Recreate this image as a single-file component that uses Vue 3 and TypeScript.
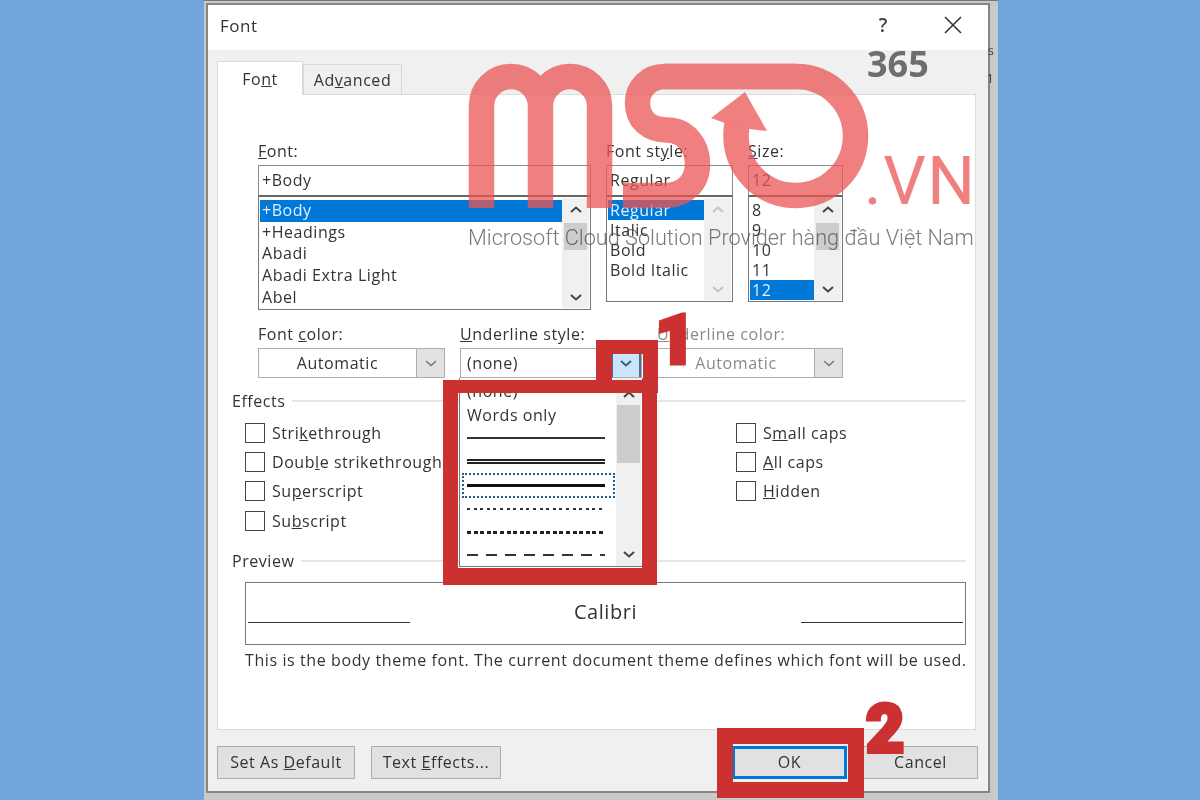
<template>
  <div class="stage">
    <div class="window">
      <span class="doc-mark mark-a">s</span>
      <span class="doc-mark mark-b">1</span>

      <div class="dialog">
        <div class="titlebar">
          <span class="title">Font</span>
          <span class="help">?</span>
          <svg class="close" width="18" height="18" viewBox="0 0 18 18">
            <path d="M1 1 L17 17 M17 1 L1 17" stroke="#333" stroke-width="1.6" fill="none" />
          </svg>
        </div>

        <div class="tabs">
          <div class="tab active">Fo<u>n</u>t</div>
          <div class="tab">Ad<u>v</u>anced</div>
        </div>

        <div class="panel">
          <div class="pickers">
            <div v-for="p in pickers" :key="p.key" class="picker">
              <div class="label">
                {{ p.pre }}<u>{{ p.key }}</u>{{ p.post }}
              </div>
              <div class="input">{{ p.value }}</div>
              <div class="list" :style="{ height: p.height + 'px' }">
                <div class="rows" :style="{ lineHeight: p.rowHeight + 'px' }">
                  <div
                    v-for="o in p.options"
                    :key="o"
                    :class="['row', { selected: o === p.value }]"
                  >
                    {{ o }}
                  </div>
                </div>
                <div :class="['scroll', { off: !p.thumb }]">
                  <svg class="chev" width="14" height="9" viewBox="0 0 14 9">
                    <path d="M2 7 L7 2.5 L12 7" />
                  </svg>
                  <div v-if="p.thumb" class="thumb"></div>
                  <svg class="chev down" width="14" height="9" viewBox="0 0 14 9">
                    <path d="M2 2 L7 6.5 L12 2" />
                  </svg>
                </div>
              </div>
            </div>
          </div>

          <div class="combos">
            <div class="combo-field">
              <div class="label">Font <u>c</u>olor:</div>
              <div class="combo">
                <span class="combo-text center">Automatic</span>
                <span class="combo-btn">
                  <svg width="14" height="9" viewBox="0 0 14 9"><path d="M2 2 L7 6.5 L12 2" /></svg>
                </span>
              </div>
            </div>

            <div class="combo-field">
              <div class="label"><u>U</u>nderline style:</div>
              <div class="combo open">
                <span class="combo-text">(none)</span>
                <span class="combo-btn hot">
                  <svg width="14" height="9" viewBox="0 0 14 9"><path d="M2 2 L7 6.5 L12 2" /></svg>
                </span>
                <div class="dropdown">
                  <div class="drop-rows">
                    <div class="drop-row">(none)</div>
                    <div class="drop-row">Words only</div>
                    <div v-for="l in lineStyles" :key="l" :class="['drop-row', { focus: l === 'thick' }]">
                      <span :class="['line', l]"></span>
                    </div>
                  </div>
                  <div class="scroll drop-scroll">
                    <svg class="chev" width="14" height="9" viewBox="0 0 14 9">
                      <path d="M2 7 L7 2.5 L12 7" />
                    </svg>
                    <div class="thumb drop-thumb"></div>
                    <svg class="chev down" width="14" height="9" viewBox="0 0 14 9">
                      <path d="M2 2 L7 6.5 L12 2" />
                    </svg>
                  </div>
                </div>
              </div>
            </div>

            <div class="combo-field disabled">
              <div class="label"><u>U</u>nderline color:</div>
              <div class="combo">
                <span class="combo-text center">Automatic</span>
                <span class="combo-btn">
                  <svg width="14" height="9" viewBox="0 0 14 9"><path d="M2 2 L7 6.5 L12 2" /></svg>
                </span>
              </div>
            </div>
          </div>

          <div class="group-head">
            <span>Effects</span>
            <div class="rule"></div>
          </div>
          <div class="effects">
            <div class="effect-col">
              <label v-for="e in effectsLeft" :key="e.key + e.pre" class="check">
                <span class="box"></span>
                <span>{{ e.pre }}<u>{{ e.key }}</u>{{ e.post }}</span>
              </label>
            </div>
            <div class="effect-col">
              <label v-for="e in effectsRight" :key="e.key + e.pre" class="check">
                <span class="box"></span>
                <span>{{ e.pre }}<u>{{ e.key }}</u>{{ e.post }}</span>
              </label>
            </div>
          </div>

          <div class="group-head preview-head">
            <span>Preview</span>
            <div class="rule"></div>
          </div>
          <div class="preview">
            <div class="preview-line"></div>
            <span class="preview-text">Calibri</span>
            <div class="preview-line"></div>
          </div>
          <div class="desc">This is the body theme font. The current document theme defines which font will be used.</div>
        </div>

        <div class="footer">
          <button class="btn wide">Set As <u>D</u>efault</button>
          <button class="btn effects-btn">Text <u>E</u>ffects...</button>
          <button class="btn ok">OK</button>
          <button class="btn cancel">Cancel</button>
        </div>
      </div>
    </div>

    <!-- annotations on top of the screenshot -->
    <div class="red-box box-arrow"></div>
    <div class="red-box box-menu"></div>
    <div class="red-box box-ok"></div>
    <span class="step step-1">1</span>
    <span class="step step-2">2</span>

    <!-- watermark -->
    <svg class="logo" width="1200" height="800" viewBox="0 0 1200 800">
      <g fill="none" stroke="#eb5555" stroke-width="25.5">
        <path d="M481.5 208 V106 a29.5 29.5 0 0 1 59 0 V208 M540.5 106 a29.5 29.5 0 0 1 59 0 V208" />
        <path d="M796 76.5 H665 C649 76.5 637.5 88 637.5 103 C637.5 119 649 130 667 130 C685 130 697.5 145 697.5 164 C697.5 183 684 195.5 665 195.5 H623" />
        <path d="M665 76.5 H796 A59.5 59.5 0 0 1 796 195.5 A60 60 0 0 1 736 135.5 C736 128 737 122 739 116" />
      </g>
      <polygon points="745,92 767,131 750,129 725,123 711,118" fill="#eb5555" />
    </svg>
    <span class="wm-365">365</span>
    <span class="wm-vn">.VN</span>
    <span class="wm-tag">Microsoft Cloud Solution Provider hàng đầu Việt Nam</span>
  </div>
</template>

<script setup lang="ts">
interface Picker {
  pre: string;
  key: string;
  post: string;
  value: string;
  options: string[];
  height: number;
  rowHeight: number;
  thumb: boolean;
}

interface Effect {
  pre: string;
  key: string;
  post: string;
}

const pickers: Picker[] = [
  {
    pre: "",
    key: "F",
    post: "ont:",
    value: "+Body",
    options: ["+Body", "+Headings", "Abadi", "Abadi Extra Light", "Abel"],
    height: 114,
    rowHeight: 21.7,
    thumb: true,
  },
  {
    pre: "Font st",
    key: "y",
    post: "le:",
    value: "Regular",
    options: ["Regular", "Italic", "Bold", "Bold Italic"],
    height: 106,
    rowHeight: 20,
    thumb: false,
  },
  {
    pre: "",
    key: "S",
    post: "ize:",
    value: "12",
    options: ["8", "9", "10", "11", "12"],
    height: 106,
    rowHeight: 20,
    thumb: true,
  },
];

const lineStyles = ["thin", "double", "thick", "dotted", "bold-dots", "dashed"];

const effectsLeft: Effect[] = [
  { pre: "Stri", key: "k", post: "ethrough" },
  { pre: "Doub", key: "l", post: "e strikethrough" },
  { pre: "Su", key: "p", post: "erscript" },
  { pre: "Su", key: "b", post: "script" },
];

const effectsRight: Effect[] = [
  { pre: "S", key: "m", post: "all caps" },
  { pre: "", key: "A", post: "ll caps" },
  { pre: "", key: "H", post: "idden" },
];
</script>

<style>
html,
body {
  margin: 0;
  background: #6fa5d8;
}
</style>

<style scoped>
.stage {
  position: relative;
  width: 1200px;
  height: 800px;
  overflow: hidden;
  display: flex;
  justify-content: center;
  background: #6fa5d8;
  font-family: "Open Sans", "Noto Sans", sans-serif;
  font-size: 16px;
  color: #333;
  filter: blur(0.35px);
}

.window {
  position: relative;
  box-sizing: border-box;
  width: 794px;
  height: 800px;
  margin-left: 2px;
  padding: 2px 8px 7px 2px;
  background: #c9c9c9;
  border-top: 1px solid #777;
}

.doc-mark {
  position: absolute;
  right: 4px;
  font-size: 13px;
  color: #444;
}
.mark-a {
  top: 40px;
}
.mark-b {
  top: 68px;
}

.dialog {
  box-sizing: border-box;
  height: 100%;
  display: flex;
  flex-direction: column;
  background: #f0f0f0;
  border: 2px solid #858585;
  letter-spacing: 0.55px;
}

.titlebar {
  flex: none;
  box-sizing: border-box;
  height: 45px;
  display: flex;
  align-items: center;
  padding: 0 26px 5px 12px;
  background: #fff;
}
.title {
  font-size: 17px;
  flex: 1;
}
.help {
  font-size: 19px;
  font-weight: 600;
  color: #444;
  margin-right: 56px;
}

.tabs {
  flex: none;
  display: flex;
  align-items: flex-end;
  height: 44px;
  padding-left: 9px;
}
.tab {
  box-sizing: border-box;
  width: 99px;
  height: 30px;
  line-height: 30px;
  text-align: center;
  background: #f0f0f0;
  border: 1px solid #d9d9d9;
  border-bottom: 0;
}
.tab.active {
  width: 86px;
  height: 34px;
  line-height: 34px;
  background: #fff;
  margin-bottom: -1px;
  position: relative;
  z-index: 1;
}

.panel {
  flex: 1;
  margin: 0 12px 0 9px;
  background: #fff;
  border: 1px solid #dcdcdc;
}

.pickers {
  display: grid;
  grid-template-columns: 333px 127px 95px;
  column-gap: 15px;
  height: 180px;
  margin: 48px 0 0 40px;
}
.label {
  height: 22px;
  line-height: 16px;
}
.input {
  box-sizing: border-box;
  height: 31px;
  line-height: 28px;
  padding-left: 3px;
  border: 1.5px solid #8c8c8c;
  border-bottom-color: #666;
}
.list {
  box-sizing: border-box;
  display: flex;
  border: 1.5px solid #777;
  border-top: 1.5px solid #666;
  padding: 1px;
}
.rows {
  flex: 1;
  padding-top: 2px;
  min-width: 0;
}
.row {
  padding-left: 2px;
}
.row.selected {
  background: #0078d7;
  color: #dff0ff;
}
.scroll {
  flex: none;
  width: 27px;
  display: flex;
  flex-direction: column;
  align-items: center;
  background: #f0f0f0;
  padding: 7px 0 6px;
  box-sizing: border-box;
}
.chev {
  flex: none;
}
.chev path,
.combo-btn path {
  fill: none;
  stroke: #444;
  stroke-width: 2;
}
.scroll.off .chev path {
  stroke: #c4c4c4;
}
.thumb {
  width: 23px;
  height: 27px;
  margin-top: 9px;
  background: #cdcdcd;
}
.chev.down {
  margin-top: auto;
}

.combos {
  display: grid;
  grid-template-columns: 187px 182px 186px;
  column-gap: 15px;
  margin-left: 40px;
  width: 585px;
}
.combo-field .label {
  height: 25px;
  line-height: 22px;
}
.combo {
  position: relative;
  box-sizing: border-box;
  height: 30px;
  display: flex;
  border: 1px solid #adadad;
}
.combo-text {
  flex: 1;
  line-height: 28px;
  padding-left: 6px;
}
.combo-text.center {
  padding-left: 0;
  text-align: center;
}
.combo-btn {
  flex: none;
  width: 27px;
  display: flex;
  align-items: center;
  justify-content: center;
  background: #e1e1e1;
  border-left: 1px solid #adadad;
}
.combo-btn path {
  stroke: #777;
  stroke-width: 1.5;
}
.combo-btn.hot {
  width: 30px;
  box-sizing: border-box;
  background: #cce4f7;
  border-left: 2px solid #3d6f9e;
  border-right: 2px solid #3d6f9e;
}
.combo-btn.hot path {
  stroke: #3d5f7e;
  stroke-width: 2;
}
.disabled {
  color: #8a8a8a;
}

.dropdown {
  position: absolute;
  z-index: 2;
  left: -2px;
  top: 29px;
  width: 184px;
  height: 189px;
  display: flex;
  background: #fff;
  box-sizing: border-box;
  border: 1px solid #777;
  border-top: 0;
}
.drop-rows {
  flex: 1;
  padding-left: 3px;
  padding-top: 2px;
}
.drop-row {
  box-sizing: border-box;
  height: 23.4px;
  line-height: 23px;
  padding-left: 4px;
  width: 151px;
  display: flex;
  align-items: center;
}
.drop-row.focus {
  outline: 2px dotted #1a5f8f;
  outline-offset: -1px;
}
.line {
  display: block;
  width: 138px;
}
.line.thin {
  height: 2px;
  background: #333;
}
.line.double {
  height: 5px;
  background: linear-gradient(#222 0 2px, #fff 2px 3px, #222 3px 5px);
}
.line.thick {
  height: 3px;
  background: #111;
}
.line.dotted {
  height: 2px;
  background: repeating-linear-gradient(90deg, #333 0 3px, transparent 3px 6.6px);
}
.line.bold-dots {
  height: 3px;
  background: repeating-linear-gradient(90deg, #222 0 4px, transparent 4px 6.6px);
}
.line.dashed {
  height: 2px;
  background: repeating-linear-gradient(90deg, #333 0 11px, transparent 11px 19px);
}
.drop-scroll {
  width: 25px;
  margin-right: 1px;
  padding: 12px 0 7px;
}
.drop-thumb {
  height: 58px;
  width: 23px;
  margin-top: 6px;
}

.group-head {
  display: flex;
  align-items: center;
  gap: 7px;
  height: 22px;
  margin: 12px 9px 0 14px;
}
.rule {
  flex: 1;
  border-top: 2px solid #e6e6e6;
}
.effects {
  display: grid;
  grid-template-columns: 491px 1fr;
  margin: 6px 0 0 27px;
  height: 132px;
}
.check {
  display: flex;
  align-items: center;
  gap: 7px;
  height: 29.4px;
}
.box {
  box-sizing: border-box;
  flex: none;
  width: 20px;
  height: 20px;
  border: 1.5px solid #444;
  background: #fff;
}

.preview-head {
  margin-top: 0;
}
.preview {
  box-sizing: border-box;
  height: 63px;
  margin: 10px 9px 0 27px;
  display: flex;
  align-items: flex-end;
  justify-content: space-between;
  padding: 0 2px 21px;
  border: 1.5px solid #777;
}
.preview-line {
  width: 162px;
  border-top: 1.5px solid #333;
}
.preview-text {
  font-size: 20px;
  line-height: 28px;
  margin-bottom: -3px;
}
.desc {
  margin: 5px 0 0 27px;
  line-height: 20px;
  letter-spacing: 0.6px;
  white-space: nowrap;
}

.footer {
  flex: none;
  box-sizing: border-box;
  height: 61px;
  display: flex;
  align-items: center;
  gap: 16px;
  padding: 3px 10px 0 9px;
}
.btn {
  box-sizing: border-box;
  height: 33px;
  padding: 0;
  background: #e1e1e1;
  border: 1.5px solid #adadad;
  font: inherit;
  letter-spacing: inherit;
  color: #333;
}
.btn.wide {
  width: 138px;
}
.btn.effects-btn {
  width: 130px;
}
.btn.ok {
  width: 115px;
  margin-left: auto;
  border: 3px solid #0078d7;
}
.btn.cancel {
  width: 115px;
}

.red-box {
  position: absolute;
  z-index: 3;
  box-sizing: border-box;
  border: 15px solid #cb3131;
}
.box-arrow {
  left: 596px;
  top: 340px;
  width: 62px;
  height: 53px;
  border-top-width: 14px;
  border-left-width: 16px;
  border-bottom: 0;
}
.box-menu {
  left: 443px;
  top: 380px;
  width: 214px;
  height: 205px;
  border-top-width: 13px;
  border-bottom-width: 17px;
}
.box-ok {
  left: 717px;
  top: 728px;
  width: 147px;
  height: 70px;
  border-width: 16px;
}

.step {
  position: absolute;
  z-index: 3;
  font-family: Roboto, "Liberation Sans", sans-serif;
  font-weight: 900;
  color: #cb3131;
  line-height: 1;
}
.step-1 {
  left: 656px;
  top: 307px;
  font-size: 67px;
  -webkit-text-stroke: 5px #cb3131;
}
.step-2 {
  left: 866px;
  top: 697px;
  font-size: 66px;
  -webkit-text-stroke: 4px #cb3131;
}

.logo {
  position: absolute;
  z-index: 4;
  left: 0;
  top: 0;
  opacity: 0.75;
  pointer-events: none;
}
.wm-365 {
  position: absolute;
  z-index: 4;
  left: 867px;
  top: 40px;
  font-size: 36px;
  line-height: 48px;
  font-weight: 700;
  color: #6e6e6e;
}
.wm-vn {
  position: absolute;
  z-index: 4;
  left: 864px;
  top: 142px;
  font-family: Roboto, sans-serif;
  font-size: 67px;
  line-height: 78px;
  letter-spacing: 1.5px;
  color: #f08080;
}
.wm-tag {
  position: absolute;
  z-index: 4;
  left: 468px;
  top: 225px;
  font-family: Roboto, sans-serif;
  font-weight: 300;
  font-size: 21.7px;
  line-height: 26px;
  white-space: nowrap;
  color: rgba(70, 70, 70, 0.72);
}
</style>
